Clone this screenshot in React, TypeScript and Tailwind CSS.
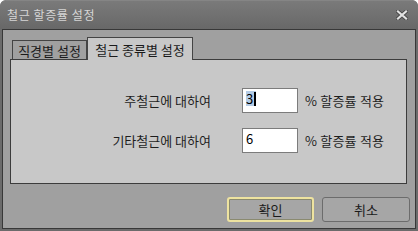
const font = { fontFamily: '"Noto Sans CJK KR", "Noto Sans", sans-serif' };

const CloseIcon = () => (
  <svg width="12" height="10" viewBox="0 0 12 10">
    <path d="M2 1.5 L10 8.5 M10 1.5 L2 8.5" stroke="#4a4a4a" strokeWidth="4" strokeLinecap="square" />
    <path d="M2 1.5 L10 8.5 M10 1.5 L2 8.5" stroke="#e2e2e2" strokeWidth="2.2" strokeLinecap="square" />
  </svg>
);

const Row = ({ label, value, selected }: { label: string; value: string; selected?: boolean }) => (
  <div className="flex items-center h-[25px]">
    <div className="w-[200px] text-right text-[13px] text-[#1e1e1e] leading-none">{label}</div>
    <div className="ml-[31px] w-[56px] h-[25px] bg-white border border-[#7c7c7c] pl-[3px] pt-[2px] text-[13px] leading-[15px] text-black">
      {selected ? (
        <span className="inline-flex items-center bg-[#b4cce6]">
          {value}
          <span className="w-[2px] h-[14px] bg-black ml-[1px]" />
        </span>
      ) : (
        value
      )}
    </div>
    <div className="ml-[7px] text-[13px] tracking-[0.2px] text-[#1e1e1e] leading-none">% 할증률 적용</div>
  </div>
);

export default function App() {
  return (
    <div style={font} className="w-[418px] h-[231px] bg-[#6b6b6b] rounded-t-[6px] flex flex-col overflow-hidden">
      <div className="h-[29px] flex items-center justify-between pl-[7px] pr-[10px] bg-gradient-to-b from-[#7a7a7a] to-[#686868] border-t border-[#858585] rounded-t-[6px]">
        <span className="text-[12px] tracking-[0.6px] text-[#d6d6d6] leading-none">철근 할증률 설정</span>
        <CloseIcon />
      </div>
      <div className="mx-[2px] mb-[2px] flex-1 border border-[#383838] bg-[#a0a0a0] flex flex-col">
        <div className="pl-[7px] pt-[7px]">
          <div className="flex items-end h-[22px]">
            <div className="ml-[2px] w-[75px] h-[19px] border border-b-0 border-[#444444] bg-[#a0a0a0] flex items-center justify-center text-[13px] text-[#1a1a1a] leading-none">
              직경별 설정
            </div>
            <div className="relative z-10 -mb-[1px] w-[106px] h-[23px] border border-b-0 border-[#444444] bg-[#c8c8c8] flex items-center justify-center text-[13px] text-[#1a1a1a] leading-none">
              철근 종류별 설정
            </div>
          </div>
          <div className="w-[397px] h-[125px] border border-[#3c3c3c] bg-[#c8c8c8] pt-[28px] flex flex-col gap-[15px]">
            <Row label="주철근에 대하여" value="3" selected />
            <Row label="기타철근에 대하여" value="6" />
          </div>
        </div>
        <div className="flex justify-end gap-[8px] pr-[5px] pt-[13px]">
          <button className="w-[87px] h-[25px] rounded-[3px] border-2 border-[#eee3a0] bg-[#a6a6a6] shadow-[inset_0_0_0_1px_#8a8a70] text-[13px] text-[#1a1a1a] leading-none">
            확인
          </button>
          <button className="w-[88px] h-[25px] rounded-[3px] border border-[#6c6c6c] bg-[#a6a6a6] text-[13px] text-[#1a1a1a] leading-none">
            취소
          </button>
        </div>
      </div>
    </div>
  );
}
